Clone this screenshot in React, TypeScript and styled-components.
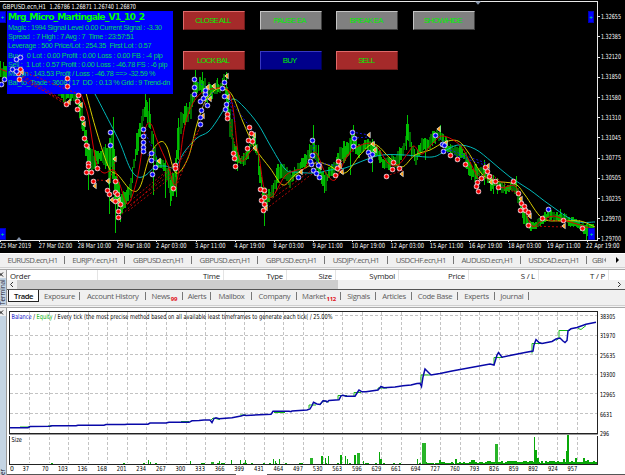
import React from "react";
import styled, { createGlobalStyle } from "styled-components";

const GlobalStyle = createGlobalStyle`
  body { margin: 0; background: #f0f0f0; overflow: hidden; }
  * { box-sizing: border-box; }
`;

const segoe = `"Open Sans", "Noto Sans", sans-serif`;
const arial = `"Liberation Sans", Arial, sans-serif`;

const Page = styled.main`
  width: 625px;
  height: 475px;
  display: flex;
  flex-direction: column;
  background: #f0f0f0;
  overflow: hidden;
  white-space: nowrap;
`;

const MarketWindow = styled.section`
  position: relative;
  height: 253px;
  flex: none;
  background: #000;
`;

const Drawing = styled.svg`
  display: block;
`;

const Overlay = styled.svg`
  position: absolute;
  left: 0;
  top: 0;
`;

const InfoPanel = styled.div`
  position: absolute;
  left: 7px;
  top: 11px;
  width: 166px;
  height: 83px;
  padding-top: 1px;
  background: #0000ff;
  color: #00d860;
  font-family: ${arial};
`;

const EaName = styled.h1`
  margin: 0 0 0 1px;
  height: 11px;
  font: bold 9.2px/10px "DejaVu Sans", sans-serif;
  letter-spacing: -0.87px;
  color: #00ff00;
`;

const InfoLine = styled.p<{ $gap: number }>`
  margin: 0 0 0 1px;
  height: 9.2px;
  font-size: 7.3px;
  line-height: 10px;
  letter-spacing: ${(p) => p.$gap}px;
  white-space: pre;
`;

const ButtonGrid = styled.div`
  position: absolute;
  left: 183px;
  top: 11px;
  display: grid;
  grid-template-columns: repeat(4, 62px);
  grid-template-rows: repeat(2, 19px);
  column-gap: 14.6px;
  row-gap: 21px;
`;

const tones = {
  red: ["#a52a2a", "#e06a6a", "#701c1c"],
  gray: ["#808080", "#c4c4c4", "#404040"],
  navy: ["#00008b", "#3838c0", "#000050"],
};

const EaButton = styled.button<{ $tone: keyof typeof tones }>`
  padding: 0 2px 0 0;
  border: 1px solid;
  border-color: ${(p) => `${tones[p.$tone][1]} ${tones[p.$tone][2]} ${tones[p.$tone][2]} ${tones[p.$tone][1]}`};
  background: ${(p) => tones[p.$tone][0]};
  color: #00ee00;
  font: 7.8px/17px ${arial};
  letter-spacing: -0.75px;
  border-radius: 0;
`;

const CornerMark = styled.div<{ $x: number; $y: number; $w: number }>`
  position: absolute;
  left: ${(p) => p.$x}px;
  top: ${(p) => p.$y}px;
  width: ${(p) => p.$w}px;
  height: 12px;
  background: #0000ff;
  border: 1px solid #0000b8;
  color: #00ff60;
  font: 6px/11px ${arial};
  text-align: center;
`;

const SymbolTabs = styled.nav`
  display: flex;
  height: 14px;
  flex: none;
  border-top: 1px solid #fff;
  background: #f0f0f0;
  font: 7.8px/12px ${segoe};
  letter-spacing: -0.57px;
  color: #5c5c5c;
`;

const SymbolTab = styled.span<{ $w: number }>`
  position: relative;
  width: ${(p) => p.$w}px;
  flex: none;
  text-align: center;
  &::after {
    content: "";
    position: absolute;
    right: 0;
    top: 2px;
    width: 1px;
    height: 8px;
    background: #777;
  }
`;

const TabScroller = styled.span`
  display: flex;
  flex: 1;
  justify-content: space-between;
  padding: 0 8px 0 5px;
`;

const Arrows = styled.svg`
  margin-top: 2px;
`;

const Splitter = styled.div`
  height: 3px;
  flex: none;
  background: #f4f4f4;
  border-top: 1px solid #d0d0d0;
  border-bottom: 1px solid #a8a8a8;
`;

const Terminal = styled.section`
  display: flex;
  height: 35px;
  flex: none;
`;

const DockStrip = styled.aside`
  width: 7px;
  flex: none;
  display: flex;
  flex-direction: column;
  border-right: 1px solid #999;
  background: #f0f0f0;
  overflow: hidden;
`;

const CloseMark = styled.svg`
  flex: none;
  margin-top: 1px;
`;

const DockTitle = styled.div`
  flex: 1;
  background: #c5d5e4;
  overflow: hidden;
  color: #223;
  font: 6.4px/6px ${segoe};
  letter-spacing: -0.1px;
  writing-mode: vertical-rl;
  transform: rotate(180deg);
  text-align: left;
`;

const TerminalBody = styled.div`
  flex: 1;
  display: flex;
  flex-direction: column;
  background: #fff;
`;

const HeaderRow = styled.div`
  display: flex;
  height: 10px;
  background: #fff;
  overflow: hidden;
  font: 7.8px/13px ${segoe};
  letter-spacing: -0.2px;
  color: #1c1c1c;
`;

const HeaderCell = styled.span<{ $w: number; $left?: boolean }>`
  width: ${(p) => p.$w}px;
  flex: none;
  padding: 0 3px;
  text-align: ${(p) => (p.$left ? "left" : "right")};
  border-right: 1px solid #e4e4e4;
`;

const ScrollRow = styled.div`
  display: flex;
  height: 10px;
  flex: none;
  align-items: stretch;
  justify-content: space-between;
  background: #f0f0f0;
  border-bottom: 1px solid #555;
`;

const ScrollThumb = styled.div`
  width: 321px;
  margin-right: auto;
  background: #cdcdcd;
`;

const TerminalTabs = styled.nav`
  display: flex;
  flex: 1;
  background: #f0f0f0;
  padding-left: 1px;
`;

const TerminalTab = styled.span<{ $w: number; $on?: boolean }>`
  position: relative;
  width: ${(p) => p.$w}px;
  height: 12px;
  flex: none;
  text-align: center;
  font: ${(p) => (p.$on ? "600" : "400")} 7.7px/12px ${segoe};
  letter-spacing: ${(p) => (p.$on ? -0.5 : -0.33)}px;
  color: ${(p) => (p.$on ? "#111" : "#5c5c5c")};
  background: ${(p) => (p.$on ? "#fff" : "transparent")};
  border: ${(p) => (p.$on ? "1px solid #222" : "0")};
  border-top: 0;
  &::after {
    content: "";
    display: ${(p) => (p.$on ? "none" : "block")};
    position: absolute;
    right: 0;
    top: 2px;
    width: 1px;
    height: 8px;
    background: #777;
  }
`;

const Count = styled.sub`
  color: #e01020;
  font: 700 6px/6px ${segoe};
  vertical-align: -2px;
  margin-left: 1px;
`;

const Tester = styled.section`
  display: flex;
  flex: 1;
`;

const TesterBody = styled.div`
  flex: 1;
  background: #fff;
`;

type P = [number, number];

/* x, high, low envelope of the price bars */
const envelope: [number, number, number][] = [
  [0, 62, 80], [4, 63, 80], [8, 66, 82], [14, 70, 84], [21, 72, 97], [30, 76, 90],
  [42, 74, 86], [55, 76, 90], [65, 78, 104], [68, 84, 103], [74, 90, 101], [79, 94, 120],
  [82, 100, 130], [86, 128, 160], [89, 145, 184], [93, 150, 172], [97, 152, 164], [102, 150, 162],
  [106, 140, 170], [109, 145, 195], [112, 124, 175], [115, 150, 218], [117, 175, 213], [121, 190, 218],
  [126, 192, 205], [131, 176, 200], [134, 150, 178], [137, 132, 160], [140, 115, 145], [144, 96, 126],
  [148, 104, 125], [151, 115, 135], [153, 130, 160], [156, 155, 171], [161, 158, 168], [165, 157, 176],
  [169, 168, 200], [172, 172, 203], [175, 160, 196], [178, 115, 160], [181, 110, 128], [185, 106, 124],
  [190, 100, 121], [193, 78, 118], [196, 72, 103], [199, 78, 98], [203, 76, 95], [208, 82, 106],
  [214, 80, 96], [220, 82, 94], [224, 72, 88], [227, 88, 116], [230, 96, 145], [233, 125, 163],
  [238, 154, 167], [244, 154, 166], [248, 145, 160], [252, 132, 148], [256, 134, 155], [259, 146, 180],
  [262, 178, 204], [265, 188, 211], [270, 188, 203], [275, 174, 196], [280, 158, 180], [285, 165, 180],
  [290, 170, 190], [295, 166, 182], [299, 162, 173], [304, 155, 170], [309, 144, 165], [313, 130, 160],
  [317, 152, 170], [322, 171, 186], [325, 174, 192], [330, 163, 181], [335, 160, 174], [339, 148, 166],
  [344, 138, 166], [349, 138, 158], [353, 127, 152], [357, 144, 158], [362, 142, 155], [368, 138, 151],
  [373, 136, 155], [378, 148, 160], [384, 157, 169], [390, 158, 170], [396, 150, 168], [401, 147, 162],
  [405, 138, 152], [408, 116, 142], [411, 138, 155], [416, 152, 164], [422, 138, 152], [427, 138, 151],
  [433, 130, 145], [439, 127, 142], [444, 135, 149], [450, 144, 155], [456, 145, 157], [463, 146, 159],
  [466, 150, 175], [470, 160, 178], [475, 165, 184], [480, 162, 178], [486, 168, 177], [491, 173, 191],
  [496, 178, 188], [502, 182, 192], [507, 184, 194], [513, 178, 190], [517, 180, 200], [521, 200, 215],
  [526, 212, 229], [531, 222, 231], [536, 220, 229], [542, 215, 226], [547, 211, 221], [553, 210, 219],
  [559, 213, 223], [565, 213, 221], [570, 217, 227], [576, 219, 226], [582, 221, 232], [587, 224, 238],
  [595, 224, 234],
];

const spikes: [number, number, number][] = [
  [88.5, 168, 190], [109.5, 180, 214], [115.5, 195, 233], [120.5, 200, 222], [113.5, 117, 160],
  [153.5, 140, 195], [165.5, 170, 198], [170.5, 180, 206], [176.5, 150, 197], [178.5, 118, 160],
  [195.5, 69, 90], [202.5, 72, 90], [217.5, 78, 92], [226.5, 72, 100], [237.5, 155, 171],
  [264.5, 195, 226], [313.5, 125, 150], [353.5, 125, 150], [350.5, 140, 175], [372.5, 140, 172],
  [406.5, 124, 150], [407.5, 115, 140], [318.5, 145, 172], [324.5, 175, 193], [440.5, 125, 140],
  [425.5, 138, 160], [484.5, 160, 185], [493.5, 175, 194], [497.5, 178, 194], [516.5, 176, 188],
  [530.5, 222, 231], [560.5, 209, 222], [586.5, 225, 240], [145.5, 94, 110], [149.5, 98, 128],
];

const noise = (n: number) => {
  const v = Math.sin(n * 12.9898) * 43758.5453;
  return v - Math.floor(v);
};

const bars = Array.from({ length: 396 }, (_, i) => {
  const x = i * 1.5 + 0.5;
  let k = 0;
  while (k < envelope.length - 2 && envelope[k + 1][0] < x) k++;
  const [ax, ah, al] = envelope[k];
  const [bx, bh, bl] = envelope[k + 1];
  const t = (x - ax) / (bx - ax);
  const hi = ah + (bh - ah) * t;
  const lo = al + (bl - al) * t;
  const span = lo - hi;
  return { x, hi: hi + noise(i) * span * 0.4 - 1, lo: lo - noise(i + 500) * span * 0.4 + 1, bright: noise(i + 90) > 0.45 };
});

const smooth = (pts: P[]) =>
  pts.reduce((d, [x, y], i) => {
    if (i === 0) return `M${x} ${y}`;
    const [px, py] = pts[i - 1];
    const [qx, qy] = pts[Math.max(i - 2, 0)];
    const [nx, ny] = pts[Math.min(i + 1, pts.length - 1)];
    return `${d}C${px + (x - qx) / 6} ${py + (y - qy) / 6} ${x - (nx - px) / 6} ${y - (ny - py) / 6} ${x} ${y}`;
  }, "");

const cyanLine: P[] = [[95, 94], [110, 123], [120, 143], [130, 168], [138, 177], [146, 175], [155, 167], [165, 166], [175, 167], [185, 151], [197, 138], [208, 132], [216, 122], [225, 108], [233, 99], [243, 106], [258, 124], [270, 145], [285, 169], [295, 172], [315, 173], [330, 170], [345, 168], [365, 160], [382, 155], [405, 155], [432, 157], [445, 151], [458, 145], [475, 149], [492, 162], [510, 177], [530, 190], [550, 205], [575, 221], [595, 222]];
const yellowLine: P[] = [[86, 93], [97, 133], [109, 168], [118, 175], [131, 190], [140, 187], [150, 155], [160, 142], [167, 147], [176, 173], [188, 158], [197, 124], [205, 102], [215, 90], [223, 89], [232, 95], [243, 122], [255, 148], [270, 168], [283, 185], [295, 175], [315, 163], [328, 165], [345, 173], [360, 155], [374, 144], [390, 158], [402, 167], [415, 155], [430, 150], [445, 142], [458, 141], [468, 152], [482, 174], [495, 181], [515, 184], [525, 195], [542, 218], [560, 221], [580, 221], [595, 227]];
const redStart: P[] = [[0, 69], [8, 72]];
const redLine: P[] = [[81, 94], [88, 115], [93, 145], [97, 165], [104, 173], [114, 170], [120, 185], [128, 204], [138, 175], [145, 130], [151, 124], [157, 140], [168, 165], [176, 184], [184, 130], [192, 105], [203, 92], [218, 88], [227, 89], [233, 108], [238, 152], [243, 161], [252, 150], [258, 151], [264, 188], [272, 197], [285, 176], [297, 170], [305, 168], [315, 152], [325, 172], [335, 180], [345, 160], [355, 148], [370, 143], [378, 148], [388, 163], [398, 165], [408, 153], [414, 146], [422, 154], [433, 143], [443, 136], [460, 145], [470, 162], [480, 180], [487, 172], [500, 187], [515, 186], [523, 205], [532, 226], [540, 222], [553, 216], [567, 221], [580, 225], [595, 230]];

const reds: P[] = [
  [20, 69], [18, 73], [19, 79], [67, 78], [67, 86], [66, 104], [78, 95], [77, 101], [77, 109], [82, 118],
  [84, 138], [86, 145], [88, 163], [88, 166], [86, 172], [91, 172], [97, 168], [93, 181], [115, 181],
  [107, 190], [109, 194], [115, 192], [117, 194], [115, 201], [120, 204], [118, 211], [118, 217],
  [175, 165], [175, 168], [173, 188], [227, 114], [227, 118], [233, 153], [234, 158], [235, 166], [249, 127],
  [251, 133], [248, 140], [247, 148], [252, 141], [260, 189], [264, 190], [261, 200], [264, 197], [263, 210],
  [264, 204], [338, 161], [337, 168], [335, 175], [386, 176], [392, 169], [393, 162], [399, 168], [450, 155],
  [457, 159], [465, 164], [481, 178], [477, 182], [476, 186], [478, 191], [485, 167], [487, 171], [489, 176],
  [495, 181], [498, 187], [513, 181], [518, 193], [521, 203], [524, 206], [520, 210], [525, 210], [528, 212],
  [528, 225], [542, 218], [563, 220], [582, 228],
];
const blues: P[] = [
  [4, 79], [1, 84], [16, 59], [20, 57], [12, 69], [16, 71], [110, 132], [110, 145], [143, 129], [143, 136],
  [143, 142], [143, 147], [143, 151], [151, 153], [151, 160], [155, 167], [152, 174], [200, 124], [194, 79],
  [194, 87], [194, 94], [200, 101], [205, 94], [203, 98], [207, 105], [205, 90], [201, 110], [200, 117], [224, 82],
  [222, 88], [224, 96], [226, 104], [225, 109], [298, 177], [312, 140], [312, 155], [311, 164], [313, 170],
  [316, 173], [318, 165], [319, 177], [310, 161], [352, 132], [354, 138], [353, 146], [368, 152], [370, 155],
  [370, 160], [372, 154], [435, 135], [442, 144], [444, 145], [443, 151], [548, 209],
];
const exits: P[] = [
  [22, 72], [69, 102], [81, 105], [84, 124], [88, 147], [95, 186], [108, 181], [115, 159], [112, 200], [119, 200],
  [159, 161], [203, 116], [208, 87], [210, 99], [214, 86], [227, 76], [228, 97], [254, 135], [253, 140],
  [255, 148], [266, 208], [301, 172], [320, 167], [340, 166], [342, 172], [369, 135], [373, 144], [375, 150],
  [402, 174], [439, 129], [446, 143], [488, 166], [491, 182], [499, 187], [521, 199], [530, 216], [564, 226],
];

const redDashes = ["M22 71L78 94", "M20 74L66 102", "M20 79L62 100M22 77L65 104", "M97 180L113 181M116 158L110 180", "M119 217L172 168M118 211L174 165M130 205L176 170M128 211L173 176", "M176 187L202 122M175 170L200 128", "M229 118L236 150M260 190L265 205", "M266 209L312 174M266 203L312 170M266 198L302 172", "M236 166L253 142", "M336 168L354 147", "M386 176L404 170", "M465 164L495 185", "M488 172L520 195M500 187L518 193", "M528 226L564 227M543 219L564 222"];
const blueDashes = ["M16 59L22 72M8 77L22 70", "M144 130L158 160M143 148L154 164M151 160L160 162", "M194 80L208 88M200 110L213 92", "M202 118L198 126", "M227 96L255 134M229 98L235 122", "M312 155L320 166M312 162L340 166", "M352 132L369 135M353 138L370 137", "M314 141L312 162", "M436 136L446 143M443 151L488 166M450 150L486 163"];

const prices = ["1.32655", "1.32385", "1.32120", "1.31850", "1.31580", "1.31310", "1.31045", "1.30775", "1.30505", "1.30235", "1.29970", "1.29700"];
const dates = ["25 Mar 2019", "27 Mar 02:00", "28 Mar 10:00", "29 Mar 18:00", "2 Apr 03:00", "3 Apr 11:00", "4 Apr 19:00", "8 Apr 03:00", "9 Apr 11:00", "10 Apr 19:00", "12 Apr 03:00", "15 Apr 11:00", "16 Apr 19:00", "18 Apr 03:00", "19 Apr 11:00", "22 Apr 19:00"];

const Trades = () => (
  <Overlay width="625" height="253" viewBox="0 0 625 253">
    <g fill="none" strokeWidth="0.9" strokeDasharray="2 2">
      {redDashes.map((d) => <path key={d} d={d} stroke="#c80808" />)}
      {blueDashes.map((d) => <path key={d} d={d} stroke="#1616e8" />)}
    </g>
    {exits.map(([x, y], i) => (
      <g key={i}>
        <path d={`M${x - 2.5} ${y}L${x + 1.5} ${y - 3.2}V${y + 3.2}Z`} fill="#fff" />
        <path d={`M${x - 1.6} ${y}L${x + 1} ${y - 2.2}V${y + 2.2}Z`} fill="#ffa51e" />
      </g>
    ))}
    {[{ pts: reds, c: "#f80000" }, { pts: blues, c: "#0000f8" }].map(({ pts, c }) =>
      pts.map(([x, y], i) => (
        <g key={c + i}>
          <circle cx={x + 0.5} cy={y + 0.5} r="2.7" fill="#e8e4ec" />
          <path d={`M${x - 1.5} ${y + 0.5}h4M${x + 0.5} ${y - 1.5}v4`} stroke={c} strokeWidth="1.9" />
        </g>
      ))
    )}
  </Overlay>
);

const PriceChart = () => (
  <Drawing width="625" height="253" viewBox="0 0 625 253">
    <g shapeRendering="crispEdges">
      {bars.filter((b) => !b.bright).map((b) => (
        <path key={b.x} d={`M${b.x} ${b.hi}V${Math.max(b.lo, b.hi + 3)}`} stroke="#006e00" strokeWidth="2" />
      ))}
      {bars.filter((b) => b.bright).map((b) => (
        <path key={b.x} d={`M${b.x} ${b.hi}V${Math.max(b.lo, b.hi + 3)}`} stroke="#00b400" strokeWidth="1.2" />
      ))}
      {spikes.map(([x, a, b]) => <path key={x} d={`M${x} ${a}V${b}`} stroke="#00c400" />)}
    </g>
    <g fill="none" strokeWidth="1">
      <path d={smooth(cyanLine)} stroke="#00b8b8" />
      <path d={smooth(yellowLine)} stroke="#d8cc00" />
      <path d={smooth(redLine)} stroke="#dc0000" />
      <path d={smooth(redStart)} stroke="#dc0000" />
    </g>
    <g stroke="#e8e8e8" fill="none" shapeRendering="crispEdges">
      <path d="M0 1.5H597.5V240.5H0" />
      {prices.map((p, i) => <path key={p} d={`M598 ${Math.round(16.2 + i * 20.2)}.5h2`} />)}
      {dates.map((d, i) => <path key={d} d={`M${Math.round(i * 39.1)}.5 240v2`} />)}
    </g>
    <path d="M475 1.5h6l-3 3.2zM16 240.5h6l-3-3.5z" fill="#8391a8" />
    <g fontFamily="DejaVu Sans Condensed" fontSize="7" fill="#fff">
      <text x="2.5" y="9" textLength="43.5" lengthAdjust="spacingAndGlyphs">GBPUSD.ecn,H1</text>
      <text x="49.5" y="9" textLength="86.5" lengthAdjust="spacingAndGlyphs">1.26786 1.26871 1.26740 1.26870</text>
      {prices.map((p, i) => (
        <text key={p} x="601" y={i === 11 ? 240.8 : 18.8 + i * 20.2} textLength="20" lengthAdjust="spacingAndGlyphs">{p}</text>
      ))}
      {dates.map((d, i) => (
        <text key={d} x={i === 0 ? 0 : i * 39.1 - 0.4} y="248.3" textLength={i === 0 ? 31 : d.length === 11 ? 30.5 : 33.5} lengthAdjust="spacingAndGlyphs">{d}</text>
      ))}
    </g>
  </Drawing>
);

const ticks = [37, 70, 103, 136, 168, 201, 234, 267, 300, 333, 366, 399, 431, 464, 497, 530, 563, 596, 629, 661, 694, 727, 760, 793, 826, 859, 892, 924, 957];
const balances = ["38305", "31970", "25635", "19300", "12965", "6631", "296"];

const balancePath = "M10 427.7H28L30 426.5L50 426.3L52 425.7H76L78 425.2H104L106 424.6H125L127 424.2H148L150 423H166L169 422.3H189L192 420.8L199 420.6L204 420H210L212 422.5L214 418.5L216 417.8L219 418.8L232 417.8L241 416L244 415L246 415.5L271 414.3L273 411.3H289L291 411.7L292 411L307 410L310 409L312 405.5L313.5 402.3L317 404L320 404.5L322 402L323 400.7L326 401L327 402L329 400.5L339 399.8L341 395.8L343 395.3L346 396.3L355 396.3L357 393L359 390L362 391.8L366 391.8L378 390L381 386.5L384 387.7L395 387L403 385.8L411 385L417 383.5L420 383.3L421.5 386.5L423 377L425 369L427 371L431 375L440 373.5L452 371L490 364L494 365L497 355L498.5 352.5L502 357.2L510 355.5L525 352.5L533 351L534 345L536 339.5L539 342.5L542 343.5L552 341.5L556 339L560 338L563 341L565 342.5L567 340.5L568 331L571 328.8L577 327.5L586 324.2L596 322.3";
const equityPath = "M20 427H30M48 426L53 425.5M181 421.5H189M210 421L213 418L220 419.5M240 415H246M274 412.5H285M309 408.5V405H316M320 405L323 401L329 402M338 400V395.5H347M354 396V392.5H361M378 390V388H387M421 383V375H430M494 364V357.5H503M532 353.5V343.5H544M556 340.5L559 338V330.5H570M578 328.5L581 329.5L586 325.5";

/* centre, height, width of the lot-size bars that stand out */
const lots: [number, number, number][] = [[148.5, 4, 1], [150.5, 2, 1], [190.5, 3, 1], [212.5, 2, 3], [219.5, 3, 1], [231.5, 4, 1], [240.5, 4, 1], [245.5, 4, 1], [273.5, 5, 1], [275.5, 3, 1], [279.5, 5, 1], [311.5, 6, 3], [322, 8, 2], [325, 6, 1], [328.5, 8, 1], [340.5, 9, 2], [345.5, 8, 1], [347.5, 5, 1], [355, 9, 2], [358, 11, 3], [363.5, 3, 1], [379.5, 12, 1], [381, 5, 2], [417.5, 5, 1], [424, 21, 4], [496.5, 20, 3], [534.5, 27, 1], [535.5, 14, 2], [566.5, 13, 2], [568.3, 29, 2]];

const BalanceChart = () => (
  <Drawing width="618" height="167" viewBox="7 308 618 167">
    <g stroke="#c3c3c3" strokeDasharray="3 2" shapeRendering="crispEdges">
      {ticks.map((t, i) => <path key={t} d={`M${Math.round(29 + i * 19.57)}.5 312V463`} />)}
      {[315, 335, 354, 374, 393, 413].map((y) => <path key={y} d={`M${y === 315 ? 335 : 10} ${y}.5H597`} />)}
    </g>
    <g fill="none" stroke="#222" shapeRendering="crispEdges">
      <path d="M9.5 311.5H597.5V433.5H9.5Z" />
      <path d="M9.5 464V435.5M597.5 435.5V464.5H9" />
      <path d="M9 434.5H598" stroke="#999" />
      <path d="M7 474.5H236M267 474.5H625" stroke="#555" />
    </g>
    <g fill="#08a808" shapeRendering="crispEdges">
      {Array.from({ length: 293 }, (_, i) => {
        const x = 11 + i * 2;
        const level = x < 200 ? 0.05 : x < 420 ? 0.25 : x < 485 ? 0.75 : 1;
        if (noise(i + 7) > level) return null;
        const h = 1 + (x > 420 ? Math.floor(noise(i + 70) * (x > 485 ? 3 : 2)) + (noise(i + 33) > 0.9 ? 3 : 0) : 0);
        return <rect key={i} x={x} y={464 - h} width="1.5" height={h} />;
      })}
      {lots.map(([x, h, w]) => <rect key={x} x={x - w / 2} y={464 - h} width={w} height={h} fill={w > 2 ? "#28b428" : "#08a808"} />)}
      <path d="M426 463.5H597M485 462.8H597" stroke="#08a808" strokeDasharray="5 1 2 2" />
    </g>
    <path d={equityPath} fill="none" stroke="#18b818" />
    <path d={balancePath} fill="none" stroke="#0808a8" strokeWidth="1.5" />
    <g fontFamily="DejaVu Sans Condensed" fontSize="6.8" fill="#000">
      <text x="11.5" y="318.6" textLength="321" lengthAdjust="spacingAndGlyphs">
        <tspan fill="#1414c8">Balance</tspan> / <tspan fill="#08b008">Equity</tspan> / Every tick (the most precise method based on all available least timeframes to generate each tick( / 25.00%
      </text>
      <text x="11.5" y="442" textLength="10.5" lengthAdjust="spacingAndGlyphs">Size</text>
      <text x="10" y="471">0</text>
      {ticks.map((t, i) => (
        <text key={t} x={28.5 + i * 19.6 - (t > 99 ? 9.8 : 6)} y="471" textLength={t > 99 ? 9.8 : 6.5} lengthAdjust="spacingAndGlyphs">{t}</text>
      ))}
      {balances.map((b, i) => (
        <text key={b} x="600" y={318.6 + i * 19.6} textLength={b.length * 3.05} lengthAdjust="spacingAndGlyphs">{b}</text>
      ))}
    </g>
  </Drawing>
);

const info: [string, number][] = [
  ["Magic : 1994 Signal Level 0.00 Current Signal : -3.30", -0.33],
  ["Spread  : 7 High : 7 Avg : 7  Time : 23:57:51", -0.35],
  ["Leverage : 500 Price/Lot : 254.35  First Lot : 0.57", -0.3],
  ["Buy :  0 Lot : 0.00 Profit : 0.00 Loss : 0.00 FB : -4 pip", -0.27],
  ["Sell :  1 Lot : 0.57 Profit : 0.00 Loss : -46.78 FS : -6 pip", -0.28],
  ["Margin : 143.53 Profit / Loss : -46.78 ==> -32.59 %", -0.33],
  ["Bal_to_Trade : 3608 / 17  DD  : 0.13 % Grid : 9 Trend-dn", -0.37],
];

const buttons: [string, keyof typeof tones][] = [
  ["CLOSE ALL", "red"], ["PAUSE EA", "gray"], ["BREAK EA", "gray"], ["SHOW/HIDE", "gray"],
  ["LOCK BAL", "red"], ["BUY", "navy"], ["SELL", "red"],
];

const symbols: [string, number][] = [
  ["EURUSD.ecn,H1", 65], ["EURJPY.ecn,H1", 60], ["GBPUSD.ecn,H1", 67], ["GBPUSD.ecn,H1", 66], ["GBPUSD.ecn,H1", 66.5],
  ["USDJPY.ecn,H1", 63], ["USDCHF.ecn,H1", 66.5], ["AUDUSD.ecn,H1", 66.5], ["USDCAD.ecn,H1", 66.5],
];

const columns: [string, number][] = [["Order", 91], ["Time", 126], ["Type", 63], ["Size", 49], ["Symbol", 63], ["Price", 70], ["S / L", 70], ["T / P", 70]];

const terminalTabs: [string, number, string?][] = [
  ["Trade", 31], ["Exposure", 41], ["Account History", 65.5], ["News", 37.5, "99"], ["Alerts", 28], ["Mailbox", 41], ["Company", 45],
  ["Market", 44, "112"], ["Signals", 35], ["Articles", 36], ["Code Base", 46], ["Experts", 37], ["Journal", 33.5],
];

const Dock = ({ title }: { title: string }) => (
  <DockStrip>
    <CloseMark width="6" height="7" viewBox="0 0 6 7">
      <path d="M-1 1.5L3 5.5M3 1.5L-1 5.5" stroke="#111" />
    </CloseMark>
    <DockTitle>{title}</DockTitle>
  </DockStrip>
);

export default function App() {
  return (
    <Page>
      <GlobalStyle />
      <MarketWindow>
        <PriceChart />
        <CornerMark $x={-1} $y={11} $w={7}>+</CornerMark>
        <CornerMark $x={588} $y={11} $w={6}>+</CornerMark>
        <CornerMark $x={-1} $y={228} $w={7}>+</CornerMark>
        <CornerMark $x={588} $y={228} $w={7}>+</CornerMark>
        <InfoPanel>
          <EaName>Mrg_Micro_Martingale_V1_10_2</EaName>
          {info.map(([text, gap]) => <InfoLine key={text} $gap={gap}>{text}</InfoLine>)}
        </InfoPanel>
        <ButtonGrid>
          {buttons.map(([label, tone]) => <EaButton key={label} $tone={tone}>{label}</EaButton>)}
        </ButtonGrid>
        <Trades />
      </MarketWindow>
      <SymbolTabs>
        {symbols.map(([s, w], i) => <SymbolTab key={i} $w={w}>{s}</SymbolTab>)}
        <TabScroller>
          GBI
          <Arrows width="16" height="8" viewBox="0 0 16 8">
            <path d="M3 1.5L1 4L3 6.5Z" fill="#888" />
            <path d="M13 1L16 4L13 7Z" fill="#000" />
          </Arrows>
        </TabScroller>
      </SymbolTabs>
      <Splitter />
      <Terminal>
        <Dock title="Terminal" />
        <TerminalBody>
          <HeaderRow>
            {columns.map(([c, w], i) => <HeaderCell key={c} $w={w} $left={i === 0}>{c}</HeaderCell>)}
          </HeaderRow>
          <ScrollRow>
            <Drawing width="10" height="9" viewBox="0 0 10 9"><path d="M6 2L3.5 4.5L6 7" fill="none" stroke="#333" /></Drawing>
            <ScrollThumb />
            <Drawing width="10" height="9" viewBox="0 0 10 9"><path d="M3 2L5.5 4.5L3 7" fill="none" stroke="#333" /></Drawing>
          </ScrollRow>
          <TerminalTabs>
            {terminalTabs.map(([t, w, n], i) => (
              <TerminalTab key={t} $w={w} $on={i === 0}>{t}{n && <Count>{n}</Count>}</TerminalTab>
            ))}
          </TerminalTabs>
        </TerminalBody>
      </Terminal>
      <Splitter />
      <Tester>
        <Dock title="er" />
        <TesterBody>
          <BalanceChart />
        </TesterBody>
      </Tester>
    </Page>
  );
}
